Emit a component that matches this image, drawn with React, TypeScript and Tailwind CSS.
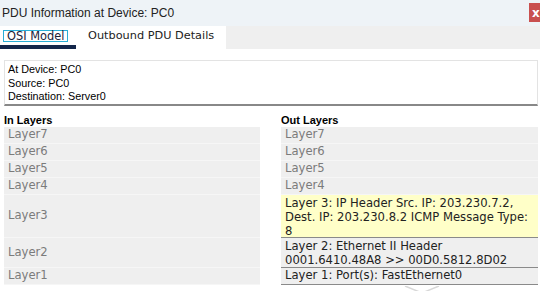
import React from "react";

const inLayers = ["Layer7", "Layer6", "Layer5", "Layer4"];

function GrayRow({ label, h = "h-[17px]" }: { label: string; h?: string }) {
  return (
    <div className={`${h} bg-[#efefef] border-b border-[#f6f6f6] flex items-center pl-1 text-[#7b7b7b]`}>
      {label}
    </div>
  );
}

export default function App() {
  return (
    <div className="w-[540px] h-[291px] bg-white overflow-hidden relative font-['DejaVu_Sans',sans-serif] text-[11.6px]">
      {/* Title bar */}
      <div className="h-[26px] bg-[#eef3f7] flex items-center justify-between">
        <span className="pl-[2px] font-['Liberation_Sans',sans-serif] text-[12px] text-[#222]">PDU Information at Device: PC0</span>
        <div className="w-[11px] h-[19px] bg-[#c9504f] overflow-hidden flex items-center pl-[3px] text-white text-[12px] font-bold self-start mt-[3px]">
          x
        </div>
      </div>

      {/* Tabs */}
      <div className="h-[23px] flex">
        <div className="w-[76px] bg-white flex flex-col">
          <div className="flex-1 flex items-center pl-[3px]">
            <span className="border border-[#2aaed6] px-[3px] leading-[10px] text-[11.4px] text-[#1a2238]">OSI Model</span>
          </div>
          <div className="h-[4px] bg-[#13264a]" />
        </div>
        <div className="w-[150px] bg-white flex items-center pl-[12px] text-[11.3px] text-[#222] pb-[3px]">
          Outbound PDU Details
        </div>
        <div className="flex-1 bg-[#efefef]" />
      </div>

      {/* Info box */}
      <div className="mt-[11px] mx-[4px] mr-[2px] h-[46px] border border-[#e3e3e3] border-b-2 border-b-[#888] px-[3px] pt-[2px] font-['Liberation_Sans',sans-serif] text-[10.8px] leading-[13.7px] text-black">
        <div>At Device: PC0</div>
        <div>Source: PC0</div>
        <div>Destination: Server0</div>
      </div>

      {/* Layers */}
      <div className="flex mt-[7px] pl-[4px] pr-[2px] gap-[21px]">
        <div className="w-[256px] flex flex-col">
          <div className="h-[14px] font-['Liberation_Sans',sans-serif] font-bold text-[11px] text-black leading-[14px]">In Layers</div>
          {inLayers.map((l) => (
            <GrayRow key={l} label={l} />
          ))}
          <GrayRow label="Layer3" h="h-[43px]" />
          <GrayRow label="Layer2" h="h-[30px]" />
          <GrayRow label="Layer1" h="h-[17px]" />
        </div>
        <div className="flex-1 flex flex-col">
          <div className="h-[14px] font-['Liberation_Sans',sans-serif] font-bold text-[11px] text-black leading-[14px]">Out Layers</div>
          {inLayers.map((l) => (
            <GrayRow key={l} label={l} />
          ))}
          <div className="h-[43px] bg-[#ffffc8] border-b border-[#8a8a8a] pl-1 pt-[1px] text-[#222] leading-[14px]">
            Layer 3: IP Header Src. IP: 203.230.7.2,
            <br />
            Dest. IP: 203.230.8.2 ICMP Message Type:
            <br />8
          </div>
          <div className="h-[30px] bg-[#efefef] border-b border-[#8a8a8a] pl-1 pt-[1px] text-[#222] leading-[14px]">
            Layer 2: Ethernet II Header
            <br />
            0001.6410.48A8 &gt;&gt; 00D0.5812.8D02
          </div>
          <div className="h-[17px] bg-[#efefef] border-b border-[#8a8a8a] pl-1 flex items-center text-[#222]">
            Layer 1: Port(s): FastEthernet0
          </div>
          <div className="flex justify-center pl-[25px] pt-[1px]">
            <svg width="36" height="8" viewBox="0 0 36 8">
              <path d="M1 0 L18 7 L35 0" fill="none" stroke="#d8d8d8" strokeWidth="1.5" />
            </svg>
          </div>
        </div>
      </div>
    </div>
  );
}
